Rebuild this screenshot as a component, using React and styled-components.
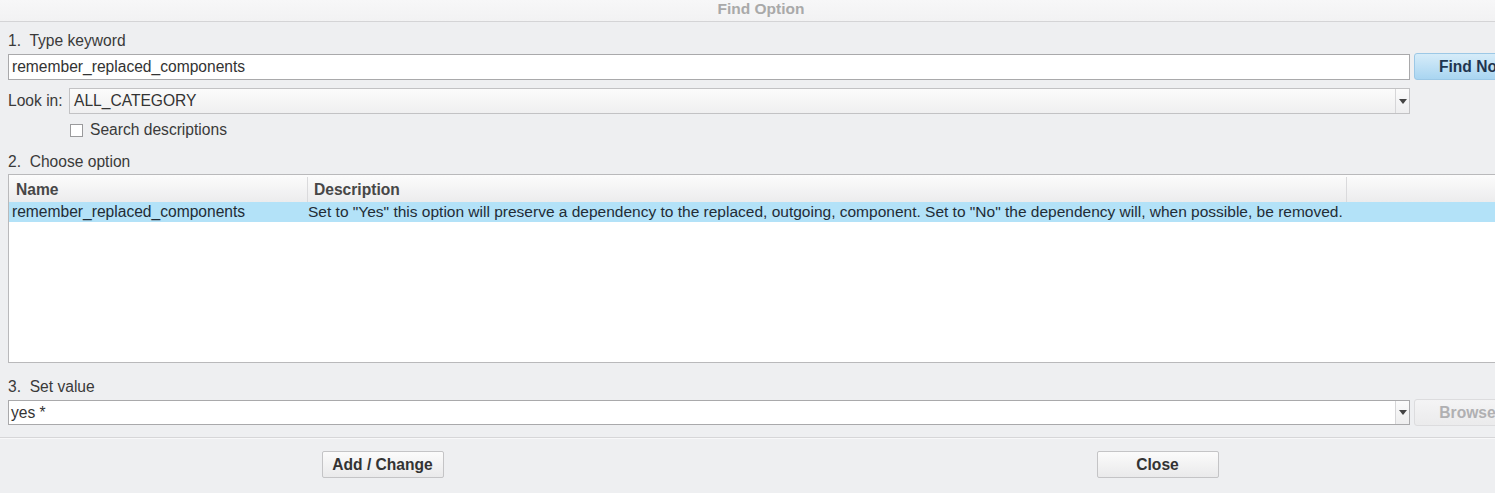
import styled, { createGlobalStyle, css } from "styled-components";

// ── Global ────────────────────────────────────────────────────────────────────

const GlobalStyle = createGlobalStyle`
  html, body {
    margin: 0;
    padding: 0;
    background: #eeeff1;
    overflow: hidden;
  }
  * { box-sizing: border-box; }
`;

const FONT = `"Liberation Sans", Arial, sans-serif`;

// ── Dialog frame ──────────────────────────────────────────────────────────────

const Dialog = styled.div`
  width: 1542px;
  height: 493px;
  background: #eeeff1;
  font-family: ${FONT};
  font-size: 15.6px;
  color: #3c3c3c;
  display: flex;
  flex-direction: column;
`;

const TitleBar = styled.div`
  height: 22px;
  flex-shrink: 0;
  display: flex;
  align-items: center;
  justify-content: center;
  padding-right: 20px;
  padding-bottom: 3px;
  background: linear-gradient(#f7f7f8, #f2f2f3);
  border-bottom: 1px solid #d4d4d6;
  color: #a9a9a9;
  font-weight: 700;
  font-size: 15.5px;
`;

const Body = styled.div`
  display: flex;
  flex-direction: column;
  padding: 0 8px;
`;

const StepLabel = styled.div`
  height: 20px;
  line-height: 20px;
  margin-top: ${(p) => p.$top}px;
  color: #3a3a3a;
  white-space: pre;
`;

// ── Inputs ────────────────────────────────────────────────────────────────────

const Row = styled.div`
  display: flex;
  align-items: center;
  gap: 4px;
  margin-top: ${(p) => p.$top || 0}px;
`;

const TextInput = styled.div`
  flex: 1;
  height: 26px;
  display: flex;
  align-items: center;
  padding-left: 3px;
  background: #fff;
  border: 1px solid #a9a9ab;
  color: #333;
  white-space: nowrap;
`;

const ComboBox = styled.div`
  flex: 1;
  height: ${(p) => (p.$flat ? 25 : 26)}px;
  display: flex;
  align-items: stretch;
  border: 1px solid ${(p) => (p.$flat ? "#a9a9ab" : "#c2c2c4")};
  background: ${(p) =>
    p.$flat ? "#fff" : "linear-gradient(#fbfbfb, #efeff0)"};
  color: #333;
`;

const ComboText = styled.div`
  flex: 1;
  display: flex;
  align-items: center;
  padding-left: ${(p) => p.$pad}px;
  white-space: nowrap;
`;

const ComboArrow = styled.div`
  width: 14px;
  display: flex;
  align-items: center;
  justify-content: center;
  border-left: 1px solid #d6d6d8;
  background: linear-gradient(#fbfbfb, #eeeeef);
  &::after {
    content: "";
    border-left: 4px solid transparent;
    border-right: 4px solid transparent;
    border-top: 5px solid #444;
    margin-left: 1px;
  }
`;

const SideButton = styled.div`
  width: 120px;
  height: 27px;
  display: flex;
  align-items: center;
  justify-content: center;
  border-radius: 3px;
  font-weight: 700;
  ${(p) =>
    p.$primary
      ? css`
          background: linear-gradient(#d6ecf9, #a9d5f1);
          border: 1px solid #9cc8e6;
          color: #1f3550;
        `
      : css`
          background: linear-gradient(#f4f4f5, #ebebec);
          border: 1px solid #dcdcde;
          color: #b0b0b2;
        `}
`;

const LookLabel = styled.span`
  width: 57px;
  flex-shrink: 0;
  color: #3a3a3a;
  white-space: nowrap;
`;

const RowSpacer = styled.span`
  width: 120px;
  flex-shrink: 0;
`;

const CheckRow = styled.label`
  display: flex;
  align-items: center;
  gap: 7px;
  height: 20px;
  margin-top: 6px;
  padding-left: 62px;
  color: #3a3a3a;
`;

const CheckBox = styled.span`
  width: 13px;
  height: 13px;
  border: 1px solid #9a9a9c;
  background: #fff;
`;

// ── Table ─────────────────────────────────────────────────────────────────────

const Table = styled.div`
  margin-top: 2px;
  margin-right: -8px;
  height: 189px;
  background: #fff;
  border: 1px solid #b9b9bb;
  border-right: none;
  display: flex;
  flex-direction: column;
`;

const COLUMNS = "299px 1039px 1fr";

const HeaderRow = styled.div`
  display: grid;
  grid-template-columns: ${COLUMNS};
  height: 27px;
  padding-top: 2px;
  background: linear-gradient(#fcfcfc, #ececed);
`;

const HeaderCell = styled.div`
  display: flex;
  align-items: center;
  padding-left: ${(p) => p.$pad}px;
  border-right: 1px solid #dadadc;
  font-weight: 700;
  color: #474747;
`;

const DataRow = styled.div`
  display: grid;
  grid-template-columns: ${COLUMNS};
  height: 20px;
  background: ${(p) => (p.$selected ? "#b3e2f8" : "#fff")};
  color: #222c36;
`;

const DataCell = styled.div`
  display: flex;
  align-items: center;
  padding-left: ${(p) => p.$pad}px;
  font-size: ${(p) => (p.$wide ? "15.5px" : "inherit")};
  white-space: nowrap;
`;

// ── Footer ────────────────────────────────────────────────────────────────────

const Divider = styled.div`
  margin-top: 11px;
  height: 2px;
  border-top: 1px solid #d6d6d8;
  border-bottom: 1px solid #f8f8f9;
`;

const Footer = styled.div`
  display: flex;
  justify-content: center;
  gap: 653px;
  padding: 12px 2px 0 0;
`;

const DialogButton = styled.div`
  width: 122px;
  height: 27px;
  display: flex;
  align-items: center;
  justify-content: center;
  border: 1px solid #c4c4c6;
  border-radius: 2px;
  background: linear-gradient(#fbfbfb, #eaeaeb);
  font-weight: 700;
  color: #333;
`;

// ── Page ──────────────────────────────────────────────────────────────────────

const option = {
  name: "remember_replaced_components",
  description:
    'Set to "Yes" this option will preserve a dependency to the replaced, outgoing, component. Set to "No" the dependency will, when possible, be removed.',
};

export default function App() {
  return (
    <>
      <GlobalStyle />
      <Dialog>
        <TitleBar>Find Option</TitleBar>
        <Body>
          <StepLabel $top={9}>{"1.  Type keyword"}</StepLabel>
          <Row $top={2}>
            <TextInput>remember_replaced_components</TextInput>
            <SideButton $primary>Find Now</SideButton>
          </Row>
          <Row $top={8}>
            <LookLabel>Look in:</LookLabel>
            <ComboBox>
              <ComboText $pad={4}>ALL_CATEGORY</ComboText>
              <ComboArrow />
            </ComboBox>
            <RowSpacer />
          </Row>
          <CheckRow>
            <CheckBox />
            Search descriptions
          </CheckRow>
          <StepLabel $top={12}>{"2.  Choose option"}</StepLabel>
          <Table>
            <HeaderRow>
              <HeaderCell $pad={7}>Name</HeaderCell>
              <HeaderCell $pad={6}>Description</HeaderCell>
              <HeaderCell $pad={0} />
            </HeaderRow>
            <DataRow $selected>
              <DataCell $pad={3}>{option.name}</DataCell>
              <DataCell $pad={0} $wide>{option.description}</DataCell>
              <DataCell $pad={0} />
            </DataRow>
          </Table>
          <StepLabel $top={14}>{"3.  Set value"}</StepLabel>
          <Row $top={2}>
            <ComboBox $flat>
              <ComboText $pad={2}>yes *</ComboText>
              <ComboArrow />
            </ComboBox>
            <SideButton>Browse...</SideButton>
          </Row>
        </Body>
        <Divider />
        <Footer>
          <DialogButton>Add / Change</DialogButton>
          <DialogButton>Close</DialogButton>
        </Footer>
      </Dialog>
    </>
  );
}
